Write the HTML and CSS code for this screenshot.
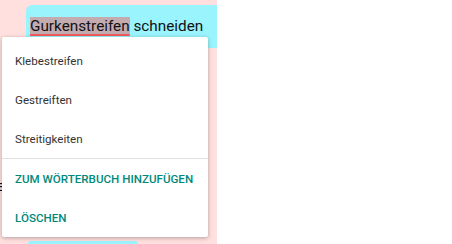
FILE: index.html
```html
<!DOCTYPE html>
<html lang="de">
<head>
    <meta charset="UTF-8">
    <meta name="viewport" content="width=device-width, initial-scale=1.0">
    <title>Rechtschreibung</title>
    <link rel="stylesheet" href="styles.css">
</head>
<body>
    <div class="chat">
        <div class="chat__bubble chat__bubble--top">
            <span class="chat__word--wrong">Gurkenstreifen</span> schneiden
        </div>
        <div class="chat__lines">
            <p class="chat__line chat__line--one">Salat mit</p>
            <p class="chat__line chat__line--two">Gurke</p>
        </div>
        <div class="chat__bubble chat__bubble--bottom"></div>

        <div class="menu">
            <div class="menu__item">Klebestreifen</div>
            <div class="menu__item">Gestreiften</div>
            <div class="menu__item">Streitigkeiten</div>
            <div class="menu__divider"></div>
            <div class="menu__item menu__item--action">Zum Wörterbuch hinzufügen</div>
            <div class="menu__item menu__item--action">Löschen</div>
        </div>
    </div>
</body>
</html>
```

FILE: styles.css
```css
* {
    box-sizing: border-box;
    margin: 0;
    padding: 0;
}

body {
    font-family: Roboto, 'Noto Sans', sans-serif;
    background: white;
    width: 452px;
    height: 244px;
    overflow: hidden;
}

/* CHAT COLUMN */
.chat {
    position: relative;
    width: 217px;
    height: 244px;
    background: #ffe0de;
    overflow: hidden;
    display: flex;
    flex-direction: column;
    padding-top: 5px;
}

.chat__bubble {
    background: #9af4fe;
}

.chat__bubble--top {
    margin-left: 26px;
    width: 220px;
    height: 43px;
    border-top-left-radius: 6px;
    padding: 10px 0 0 4px;
    font-size: 15.3px;
    line-height: 22px;
    color: #111;
    white-space: nowrap;
}

.chat__word--wrong {
    background: #c4abb0;
    text-decoration: underline;
    text-decoration-color: #f25c5c;
    text-decoration-thickness: 1.5px;
    text-underline-offset: 3px;
}

.chat__lines {
    flex: 1;
    font-size: 15.3px;
    line-height: 20px;
    color: #111;
}

.chat__line {
    margin-left: -65px;
    white-space: nowrap;
}

.chat__line--one {
    margin-top: 49px;
}

.chat__line--two {
    margin-top: 59px;
    margin-left: -35px;
}

.chat__bubble--bottom {
    margin-left: 28px;
    width: 110px;
    height: 3px;
    border-top-left-radius: 6px;
    border-top-right-radius: 6px;
}

/* POPUP MENU */
.menu {
    position: absolute;
    top: 37px;
    left: 2px;
    width: 206px;
    padding-top: 4px;
    background: white;
    border-radius: 2px;
    box-shadow: 0px 1px 4px rgba(0, 0, 0, 0.3);
}

.menu__item {
    height: 39px;
    display: flex;
    align-items: center;
    padding-left: 13px;
    font-size: 11.6px;
    color: #333;
    white-space: nowrap;
}

.menu__item--action {
    color: #00897b;
    font-weight: 500;
    text-transform: uppercase;
    font-size: 11.6px;
}

.menu__divider {
    height: 1px;
    background: #e0e0e0;
}
```
